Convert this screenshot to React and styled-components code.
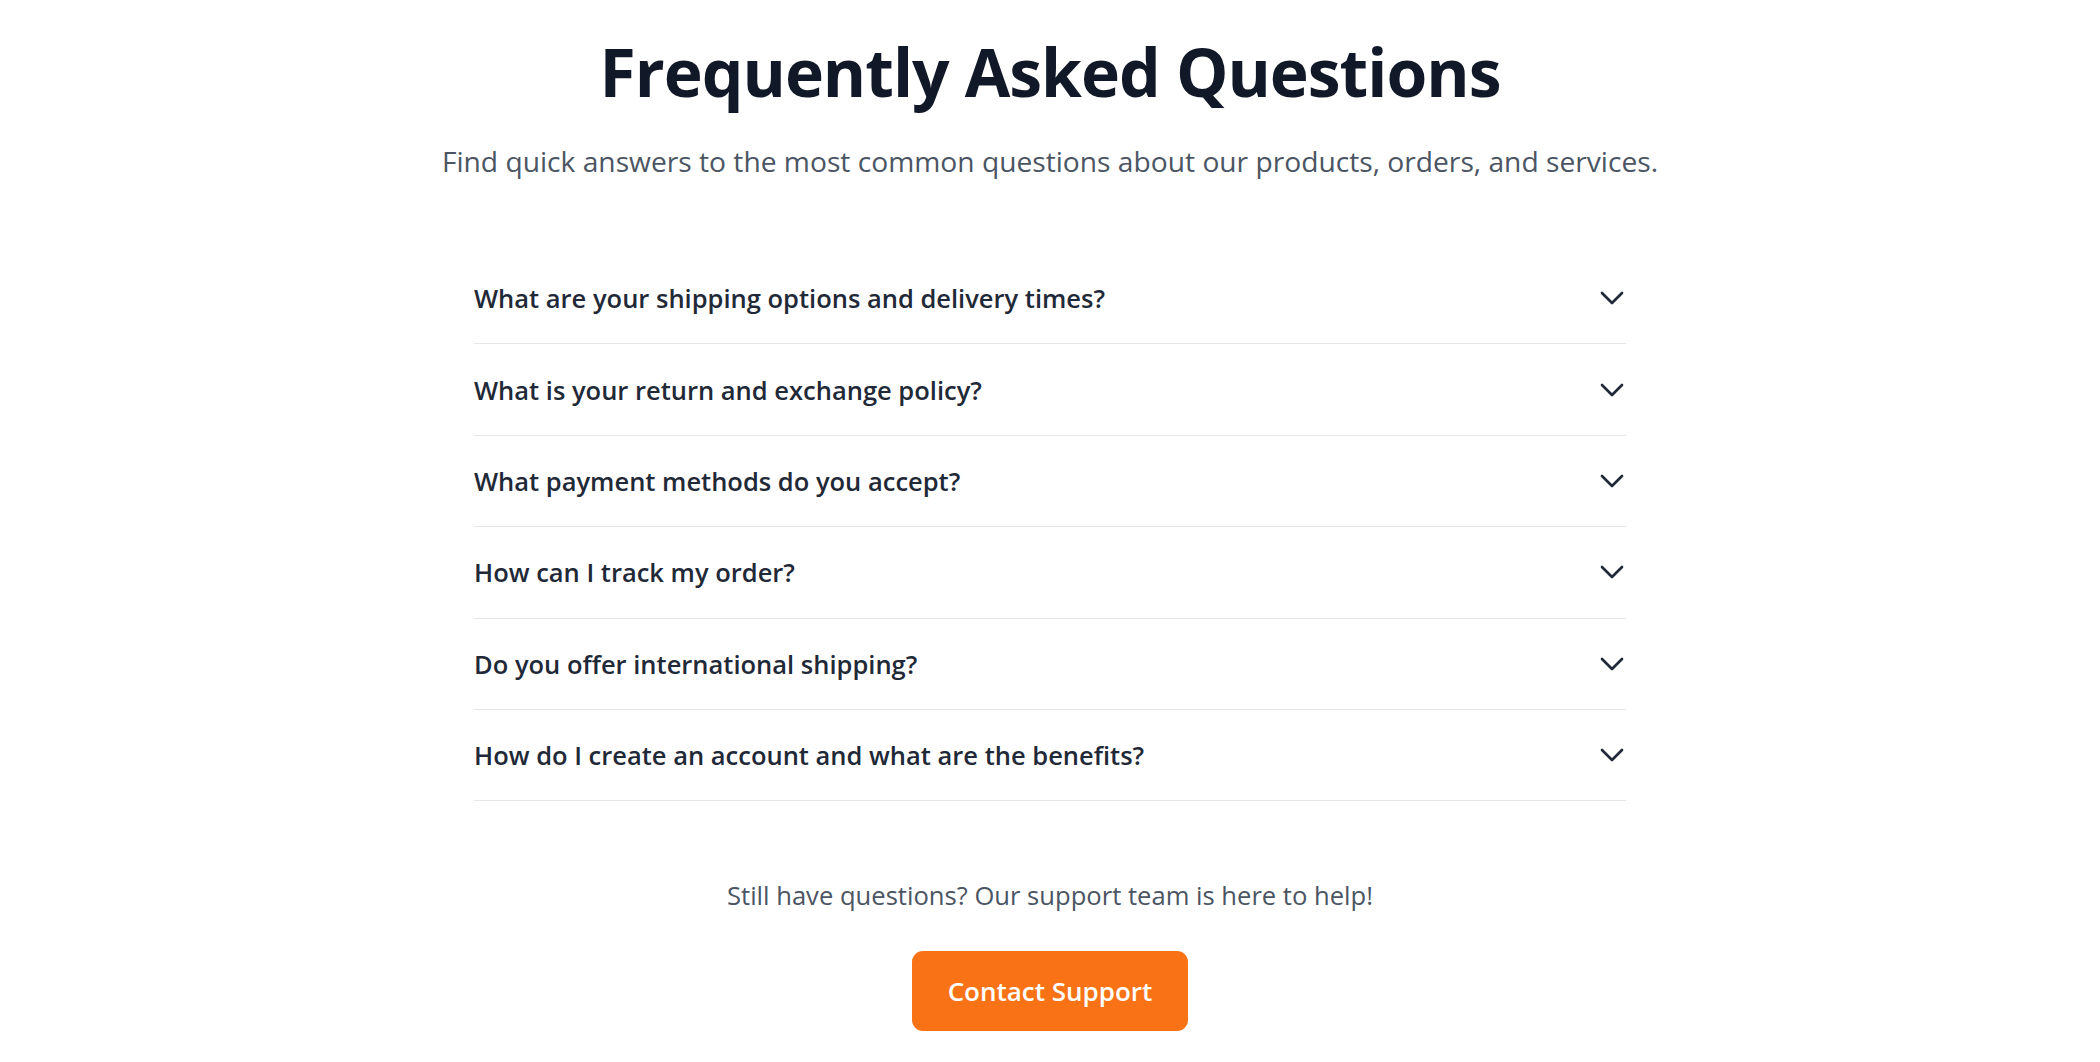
import React, { useState } from "react";
import styled, { createGlobalStyle } from "styled-components";

const GlobalStyle = createGlobalStyle`
  html, body {
    margin: 0;
    padding: 0;
    background: #ffffff;
  }
  body {
    font-family: "Open Sans", "Noto Sans", sans-serif;
  }
  * {
    box-sizing: border-box;
  }
`;

const questions = [
  {
    q: "What are your shipping options and delivery times?",
    a: "We offer standard, express and next-day shipping. Standard orders arrive within 3-5 business days.",
  },
  {
    q: "What is your return and exchange policy?",
    a: "Items can be returned or exchanged within 30 days of delivery in their original condition.",
  },
  {
    q: "What payment methods do you accept?",
    a: "We accept all major credit cards, PayPal, Apple Pay and Google Pay.",
  },
  {
    q: "How can I track my order?",
    a: "Once your order ships you will receive an email with a tracking link.",
  },
  {
    q: "Do you offer international shipping?",
    a: "Yes, we ship to most countries worldwide. Rates are calculated at checkout.",
  },
  {
    q: "How do I create an account and what are the benefits?",
    a: "Click Sign Up in the top menu. Members get faster checkout, order history and exclusive offers.",
  },
];

function Chevron({ open }) {
  return (
    <ChevronIcon
      open={open}
      viewBox="0 0 24 24"
      fill="none"
      stroke="currentColor"
      strokeWidth="2"
      strokeLinecap="round"
      strokeLinejoin="round"
    >
      <path d="M19.5 8.25l-7.5 7.5-7.5-7.5" />
    </ChevronIcon>
  );
}

function App() {
  const [open, setOpen] = useState(null);

  return (
    <>
      <GlobalStyle />
      <Page>
        <Title>Frequently Asked Questions</Title>
        <Subtitle>
          Find quick answers to the most common questions about our products,
          orders, and services.
        </Subtitle>

        <List>
          {questions.map((item, i) => (
            <Item key={item.q}>
              <QuestionButton onClick={() => setOpen(open === i ? null : i)}>
                <span>{item.q}</span>
                <Chevron open={open === i} />
              </QuestionButton>
              {open === i && <Answer>{item.a}</Answer>}
            </Item>
          ))}
        </List>

        {/* 하단 문의 영역 */}
        <HelpText>Still have questions? Our support team is here to help!</HelpText>
        <ContactButton>Contact Support</ContactButton>
      </Page>
    </>
  );
}

const Page = styled.div`
  display: flex;
  flex-direction: column;
  align-items: center;
  padding: 26px 0 30px;
`;

const Title = styled.h1`
  margin: 0;
  font-size: 66px;
  line-height: 90px;
  font-weight: 700;
  letter-spacing: -1px;
  color: #111827;
`;

const Subtitle = styled.p`
  margin: 23px 0 0;
  font-size: 28.2px;
  line-height: 44px;
  font-weight: 400;
  color: #4b5563;
`;

const List = styled.div`
  width: 1152px;
  margin-top: 70px;
`;

const Item = styled.div`
  border-bottom: 1px solid #e5e7eb;
`;

const QuestionButton = styled.button`
  display: flex;
  align-items: center;
  justify-content: space-between;
  width: 100%;
  height: 90.4px;
  padding: 0;
  border: 0;
  background: none;
  cursor: pointer;
  text-align: left;
  font-family: "Open Sans", "Noto Sans", sans-serif;
  font-size: 25.5px;
  font-weight: 600;
  color: #1f2937;
`;

const ChevronIcon = styled.svg`
  width: 32px;
  height: 32px;
  flex-shrink: 0;
  margin-right: -2px;
  color: #1f2937;
  transform: ${(props) => (props.open ? "rotate(180deg)" : "none")};
  transition: transform 0.2s ease;
`;

const Answer = styled.p`
  margin: 0 0 28px;
  font-size: 22px;
  line-height: 34px;
  color: #4b5563;
`;

const HelpText = styled.p`
  margin: 75px 0 0;
  font-size: 25.6px;
  line-height: 40px;
  color: #4b5563;
`;

const ContactButton = styled.button`
  margin-top: 35px;
  height: 80px;
  padding: 0 36px;
  border: 0;
  border-radius: 11px;
  background-color: #f97316;
  color: #ffffff;
  font-family: "Open Sans", "Noto Sans", sans-serif;
  font-size: 26px;
  font-weight: 600;
  cursor: pointer;
`;

export default App;
